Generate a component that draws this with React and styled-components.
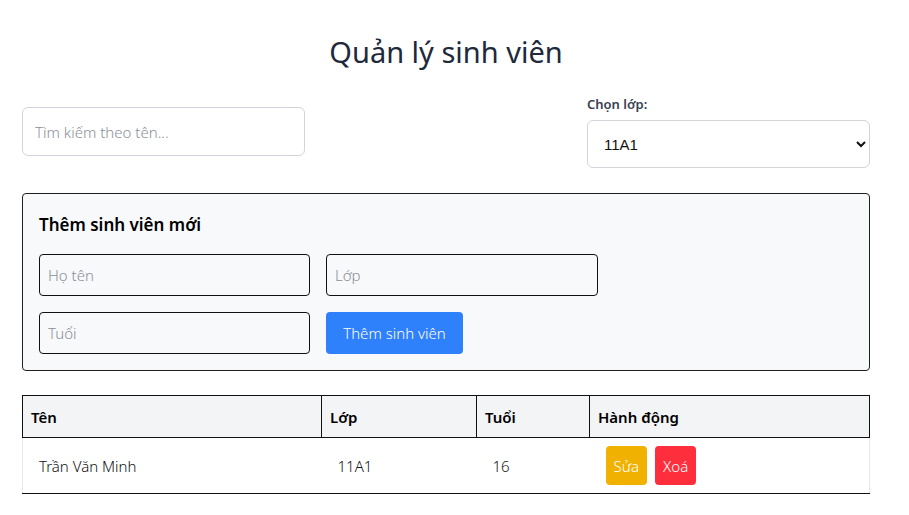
import React from 'react';
import styled, { createGlobalStyle } from 'styled-components';

const GlobalStyle = createGlobalStyle`
  body {
    margin: 0;
    background: #ffffff;
    font-family: "Noto Sans", "Open Sans", sans-serif;
  }
`;

const students = [
  { name: 'Trần Văn Minh', className: '11A1', age: 16 }
];

const App = () => {
  return (
    <>
      <GlobalStyle />
      <Page>
        <Title>Quản lý sinh viên</Title>

        <FilterRow>
          <SearchInput placeholder="Tìm kiếm theo tên..." />
          <SelectGroup>
            <Label>Chọn lớp:</Label>
            <ClassSelect defaultValue="11A1">
              <option value="11A1">11A1</option>
              <option value="11A2">11A2</option>
              <option value="12A1">12A1</option>
            </ClassSelect>
          </SelectGroup>
        </FilterRow>

        <FormBox>
          <FormTitle>Thêm sinh viên mới</FormTitle>
          <FormGrid>
            <FormInput placeholder="Họ tên" />
            <FormInput placeholder="Lớp" />
            <FormInput placeholder="Tuổi" />
            <AddButton>Thêm sinh viên</AddButton>
          </FormGrid>
        </FormBox>

        <Table>
          <colgroup>
            <col style={{ width: '299px' }} />
            <col style={{ width: '155px' }} />
            <col style={{ width: '113px' }} />
            <col />
          </colgroup>
          <thead>
            <tr>
              <Th>Tên</Th>
              <Th>Lớp</Th>
              <Th>Tuổi</Th>
              <Th>Hành động</Th>
            </tr>
          </thead>
          <tbody>
            {students.map((s) => (
              <tr key={s.name}>
                <Td>{s.name}</Td>
                <Td>{s.className}</Td>
                <Td>{s.age}</Td>
                <Td>
                  <Actions>
                    <ActionButton $color="#f0b100">Sửa</ActionButton>
                    <ActionButton $color="#ff2e3c">Xoá</ActionButton>
                  </Actions>
                </Td>
              </tr>
            ))}
          </tbody>
        </Table>
      </Page>
    </>
  );
};

const Page = styled.div`
  width: 848px;
  margin-left: 22px;
  padding: 30px 0 20px;
`;

const Title = styled.h1`
  margin: 0 0 21px;
  text-align: center;
  font-size: 29px;
  font-weight: 400;
  color: #1e293b;
  line-height: 44px;
`;

const FilterRow = styled.div`
  display: flex;
  justify-content: space-between;
  align-items: center;
  margin-bottom: 25px;
`;

const SearchInput = styled.input`
  box-sizing: border-box;
  width: 283px;
  height: 49px;
  padding: 0 12px;
  border: 1px solid #d1d5db;
  border-radius: 6px;
  font-family: inherit;
  font-size: 15px;
  font-weight: 300;
  outline: none;

  &::placeholder {
    color: #8a8f98;
  }
`;

const SelectGroup = styled.div`
  display: flex;
  flex-direction: column;
  gap: 7px;
  width: 283px;
`;

const Label = styled.label`
  font-size: 13px;
  font-weight: 600;
  color: #374151;
  line-height: 18px;
`;

const ClassSelect = styled.select`
  box-sizing: border-box;
  width: 100%;
  height: 48px;
  padding: 0 12px;
  border: 1px solid #d1d5db;
  border-radius: 6px;
  background: #ffffff;
  font-family: "Liberation Sans", Arial, sans-serif;
  font-size: 15px;
  color: #111111;
`;

const FormBox = styled.div`
  box-sizing: border-box;
  border: 1px solid #1f1f1f;
  border-radius: 4px;
  background: #f8f9fb;
  padding: 18px 16px 16px;
  margin-bottom: 24px;
`;

const FormTitle = styled.h3`
  margin: 0 0 16px;
  font-size: 17px;
  font-weight: 600;
  color: #000000;
  line-height: 26px;
`;

const FormGrid = styled.div`
  display: grid;
  grid-template-columns: 271px 272px;
  grid-auto-rows: 42px;
  gap: 16px;
  justify-items: start;
`;

const FormInput = styled.input`
  box-sizing: border-box;
  width: 100%;
  height: 42px;
  padding: 0 8px;
  border: 1px solid #111111;
  border-radius: 4px;
  background: transparent;
  font-family: inherit;
  font-size: 15px;
  font-weight: 300;
  outline: none;

  &::placeholder {
    color: #8a8f98;
  }
`;

const AddButton = styled.button`
  width: 137px;
  height: 42px;
  border: none;
  border-radius: 4px;
  background: #2f80fb;
  color: #ffffff;
  font-family: inherit;
  font-size: 15px;
  font-weight: 300;
  cursor: pointer;
`;

const Table = styled.table`
  width: 100%;
  border-collapse: collapse;
  table-layout: fixed;
`;

const Th = styled.th`
  height: 42px;
  box-sizing: border-box;
  padding: 0 8px;
  border: 1px solid #111111;
  background: #f3f4f6;
  text-align: left;
  font-size: 15px;
  font-weight: 600;
  color: #000000;
`;

const Td = styled.td`
  height: 56px;
  box-sizing: border-box;
  padding: 0 16px;
  border-bottom: 1px solid #111111;
  font-size: 15px;
  font-weight: 300;
  color: #111111;

  &:first-child {
    border-left: 1px solid #e5e7eb;
  }

  &:last-child {
    border-right: 1px solid #e5e7eb;
  }
`;

const Actions = styled.div`
  display: flex;
  gap: 8px;
`;

const ActionButton = styled.button`
  height: 39px;
  padding: 0 8px;
  border: none;
  border-radius: 4px;
  background: ${(props) => props.$color};
  color: #ffffff;
  font-family: inherit;
  font-size: 15px;
  font-weight: 300;
  cursor: pointer;
`;

export default App;
